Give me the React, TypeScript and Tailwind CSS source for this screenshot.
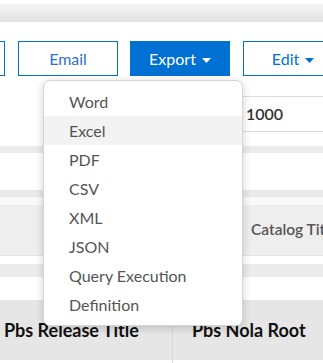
import React from "react";

const Caret = ({ color }: { color: string }) => (
  <svg width="9" height="5" viewBox="0 0 9 5" className="ml-[6px] mt-[3px]">
    <path d="M0 0 L9 0 L4.5 5 Z" fill={color} />
  </svg>
);

const items = ["Word", "Excel", "PDF", "CSV", "XML", "JSON", "Query Execution", "Definition"];

export default function App() {
  return (
    <div
      className="relative w-[323px] h-[363px] overflow-hidden bg-white"
      style={{ fontFamily: "Lato, 'Open Sans', sans-serif" }}
    >
      {/* top bar */}
      <div className="h-[4px]" />
      <div className="h-[18px] bg-gradient-to-b from-[#f4f4f4] to-[#e2e2e2]" />
      <div className="h-[19px]" />

      {/* button row */}
      <div className="flex h-[35px] text-[16px]">
        <div className="shrink-0 w-[5px] border-y border-r border-[#0070d2]" />
        <div className="shrink-0 ml-[13px] w-[100px] border border-[#0070d2] text-[#2f6fd0] flex items-center justify-center">
          Email
        </div>
        <div className="shrink-0 ml-[12px] w-[100px] bg-[#0070d2] text-white flex items-center justify-center">
          Export
          <Caret color="#ffffff" />
        </div>
        <div className="shrink-0 ml-[13px] w-[100px] border border-[#0070d2] text-[#0070d2] flex items-center justify-center">
          Edit
          <Caret color="#0070d2" />
        </div>
      </div>

      {/* filter row */}
      <div className="h-[20px]" />
      <div className="flex h-[36px]">
        <div className="w-[160px] shrink-0" />
        <div className="flex-1 border-y border-[#dcdcdc] flex items-center pl-[86px] text-[16px] font-semibold text-[#333]">
          1000
        </div>
      </div>
      <div className="h-[14px]" />
      <div className="h-[7px] bg-[#ebebeb]" />
      <div className="h-[37px]" />
      <div className="h-[7px] bg-[#e9e9e9]" />
      <div className="h-[8px] bg-[#f8f8f8]" />
      <div className="h-[50px] bg-[#eeeeee] flex items-center">
        <span className="shrink-0 ml-[251px] text-[15.5px] font-semibold text-[#555] whitespace-nowrap">Catalog Title</span>
      </div>
      <div className="h-[9px] border-t border-[#e3e3e3]" />
      <div className="h-[13px] bg-[#ebebeb]" />
      <div className="h-[23px]" />

      {/* table header */}
      <div className="flex h-[60px] bg-[#e6e6e6] text-[18px] font-bold text-[#111]">
        <div className="shrink-0 w-[173px] border-r border-[#d8d8d8] flex items-center pl-[4px] whitespace-nowrap">
          Pbs Release Title
        </div>
        <div className="flex-1 flex items-center pl-[19px] whitespace-nowrap">Pbs Nola Root</div>
      </div>
      <div className="flex h-[10px]">
        <div className="w-[173px] border-r border-[#e0e0e0]" />
      </div>

      {/* dropdown menu */}
      <div className="absolute left-[43px] top-[80px] w-[200px] h-[246px] bg-white rounded-[7px] border border-[#d6d6d6] shadow-[0_2px_8px_rgba(0,0,0,0.18)] pt-[6px]">
        {items.map((it, i) => (
          <div
            key={it}
            className={`h-[29px] flex items-center pl-[25px] text-[16px] text-[#555] ${i === 1 ? "bg-[#f3f3f3]" : ""}`}
          >
            {it}
          </div>
        ))}
      </div>
    </div>
  );
}
